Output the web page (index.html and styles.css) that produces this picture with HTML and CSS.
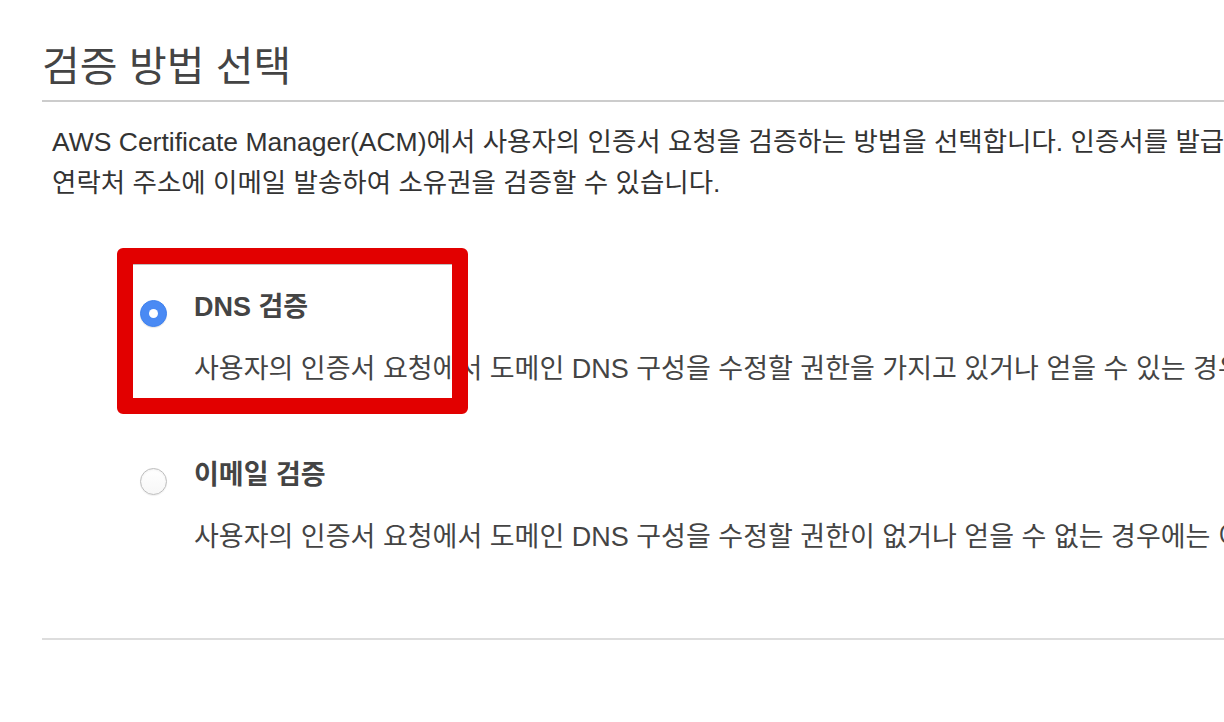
FILE: index.html
```html
<!DOCTYPE html>
<html lang="ko">
<head>
<meta charset="utf-8">
<title>검증 방법 선택</title>
<link rel="stylesheet" href="styles.css">
</head>
<body>
<main class="section">
  <h2 class="title">검증 방법 선택</h2>
  <p class="intro">AWS Certificate Manager(ACM)에서 사용자의 인증서 요청을 검증하는 방법을 선택합니다. 인증서를 발급하기 전에 DNS 구성을 수정하거나 도메인 소유자의<br>연락처 주소에 이메일 발송하여 소유권을 검증할 수 있습니다.</p>
  <div class="options">
    <label class="option">
      <span class="radio radio-checked"></span>
      <span class="opt-text">
        <span class="opt-title">DNS 검증</span>
        <span class="opt-desc">사용자의 인증서 요청에서 도메인 DNS 구성을 수정할 권한을 가지고 있거나 얻을 수 있는 경우 이 옵션을 선택합니다.</span>
      </span>
    </label>
    <label class="option">
      <span class="radio"></span>
      <span class="opt-text">
        <span class="opt-title">이메일 검증</span>
        <span class="opt-desc">사용자의 인증서 요청에서 도메인 DNS 구성을 수정할 권한이 없거나 얻을 수 없는 경우에는 이 옵션을 선택합니다.</span>
      </span>
    </label>
  </div>
  <div class="footer-rule"></div>
  <div class="highlight"></div>
</main>
</body>
</html>
```
FILE: styles.css
```css
html, body {
  margin: 0;
  padding: 0;
  background: #ffffff;
  overflow: hidden;
}
body {
  width: 1224px;
  height: 722px;
  font-family: "Liberation Sans", "Noto Sans CJK KR", sans-serif;
  color: #333333;
}
.section {
  position: relative;
  padding-left: 42px;
  width: 2400px;
}
.title {
  margin: 0;
  padding-top: 37px;
  padding-bottom: 11px;
  height: 52px;
  line-height: 52px;
  font-size: 41px;
  font-weight: 400;
  color: #444444;
  border-bottom: 2px solid #cccccc;
  font-family: "Noto Sans CJK KR", sans-serif;
}
.intro {
  margin: 20px 0 0 0;
  padding-left: 10px;
  font-size: 26.5px;
  line-height: 41px;
  white-space: nowrap;
  color: #333333;
}
.options {
  display: flex;
  flex-direction: column;
  gap: 68px;
  margin-top: 86px;
  padding-left: 98px;
}
.option {
  display: flex;
  align-items: flex-start;
  gap: 27px;
}
.radio {
  flex: none;
  box-sizing: border-box;
  width: 27px;
  height: 27px;
  margin-top: 10px;
  border-radius: 50%;
  background: linear-gradient(#ffffff, #f7f7f7);
  border: 1px solid #bdbdbd;
  box-shadow: inset 0 1px 2px rgba(0,0,0,0.06), 0 1px 1px rgba(0,0,0,0.06);
  position: relative;
}
.radio-checked {
  background: #4a8af4;
  border-color: #3f81ee;
  box-shadow: 0 1px 1px rgba(0,0,0,0.1);
}
.radio-checked::after {
  content: "";
  position: absolute;
  left: 50%;
  top: 50%;
  width: 9px;
  height: 9px;
  margin: -4.5px 0 0 -4.5px;
  border-radius: 50%;
  background: #ffffff;
}
.opt-text {
  display: flex;
  flex-direction: column;
  gap: 25px;
  white-space: nowrap;
}
.opt-title {
  font-size: 27px;
  line-height: 34px;
  font-weight: 700;
  color: #444444;
}
.opt-desc {
  font-size: 27px;
  line-height: 41px;
  color: #444444;
}
.footer-rule {
  margin-top: 80px;
  border-top: 2px solid #dddddd;
}
.highlight {
  position: absolute;
  left: 117px;
  top: 248px;
  width: 351px;
  height: 166px;
  box-sizing: border-box;
  border: 16px solid #e20000;
  border-radius: 6px;
  box-shadow: inset 0 1px 0 rgba(0,0,0,0.25);
}
```
